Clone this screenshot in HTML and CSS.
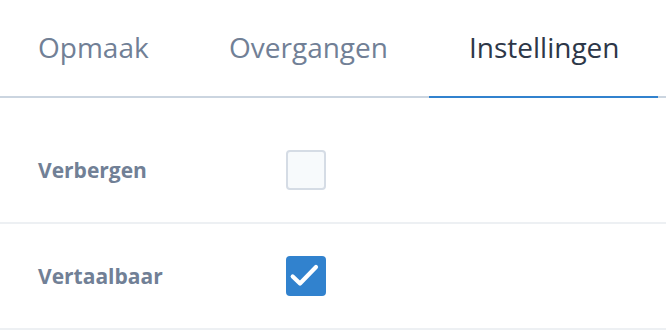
FILE: index.html
```html
<!DOCTYPE html>
<html>
<head>
<meta charset="utf-8">
<link rel="stylesheet" href="styles.css">
</head>
<body>
<div class="panel">
  <nav class="tabs">
    <div class="tab tab-1">Opmaak</div>
    <div class="tab tab-2">Overgangen</div>
    <div class="tab tab-3 active">Instellingen</div>
  </nav>
  <div class="rows">
    <div class="row first">
      <div class="label">Verbergen</div>
      <div class="checkbox"></div>
    </div>
    <div class="row">
      <div class="label">Vertaalbaar</div>
      <div class="checkbox checked">
        <svg viewBox="0 0 40 40" width="40" height="40"><path d="M6.7 20.5 L14 27.5 L30 11" fill="none" stroke="#fff" stroke-width="4.2" stroke-linecap="round" stroke-linejoin="round"/></svg>
      </div>
    </div>
  </div>
</div>
</body>
</html>
```
FILE: styles.css
```css
html, body {
  margin: 0;
  padding: 0;
  background: #fff;
}
.panel {
  width: 666px;
  font-family: "Open Sans", sans-serif;
}
.tabs {
  display: flex;
  height: 96px;
  border-bottom: 2px solid #cbd5e0;
  box-sizing: content-box;
}
.tab {
  font-size: 28px;
  line-height: 38px;
  color: #718096;
  padding: 28px 39px 0 39px;
  box-sizing: border-box;
  height: 98px;
  margin-bottom: -2px;
  white-space: nowrap;
}
.tab-1 { padding-left: 38px; width: 190px; }
.tab-2 { width: 239px; }
.tab-3 { width: 229px; padding-left: 40px; }
.tab.active {
  color: #2d3748;
  border-bottom: 2px solid #3182ce;
}
.rows {
  padding-top: 20px;
}
.row {
  display: flex;
  align-items: center;
  height: 104px;
  border-bottom: 2px solid #edf0f3;
  padding-left: 38px;
}
.label {
  width: 248px;
  font-size: 21px;
  font-weight: 700;
  color: #718096;
}
.checkbox {
  width: 40px;
  height: 40px;
  box-sizing: border-box;
  border: 2px solid #d5dce5;
  border-radius: 4px;
  background: #f7fafc;
}
.checkbox.checked {
  background: #3182ce;
  border: none;
}
.checkbox svg { display: block; }
```
